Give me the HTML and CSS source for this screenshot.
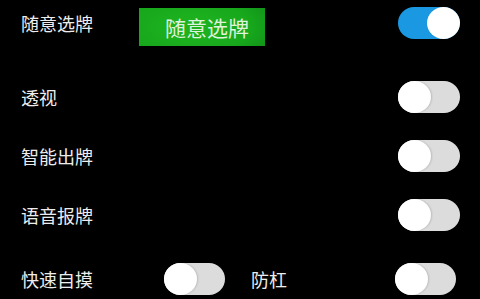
FILE: index.html
```html
<!DOCTYPE html>
<html lang="zh">
<head>
<meta charset="utf-8">
<link rel="stylesheet" href="styles.css">
</head>
<body>
<div class="panel">
  <div class="row row-first">
    <span class="label">随意选牌</span>
    <div class="btn-green">随意选牌</div>
    <div class="toggle on"><span class="knob"></span></div>
  </div>
  <div class="row">
    <span class="label">透视</span>
    <div class="toggle"><span class="knob"></span></div>
  </div>
  <div class="row">
    <span class="label">智能出牌</span>
    <div class="toggle"><span class="knob"></span></div>
  </div>
  <div class="row">
    <span class="label">语音报牌</span>
    <div class="toggle"><span class="knob"></span></div>
  </div>
  <div class="row row-last">
    <span class="label">快速自摸</span>
    <div class="toggle toggle-mid"><span class="knob"></span></div>
    <span class="label label-mid">防杠</span>
    <div class="toggle toggle-end"><span class="knob"></span></div>
  </div>
</div>
</body>
</html>
```
FILE: styles.css
```css
html, body {
  margin: 0;
  padding: 0;
  background: #000;
  overflow: hidden;
  height: 299px;
}
.panel {
  font-family: "Noto Sans CJK SC", "Noto Sans", sans-serif;
  color: #ededed;
  padding: 0 20px 0 21px;
}
.row {
  display: flex;
  align-items: center;
  height: 59px;
}
.row-first {
  height: 46px;
  margin-bottom: 21px;
}
.row-last {
  height: auto;
  padding-top: 19px;
  padding-right: 4px;
}
.label {
  font-size: 18px;
  line-height: 20px;
  width: 72px;
  white-space: nowrap;
}
.label-mid {
  width: auto;
  margin-left: 26px;
}
.btn-green {
  margin-left: 46px;
  margin-top: 8px;
  width: 100px;
  height: 38px;
  padding-left: 26px;
  display: flex;
  align-items: center;
  font-size: 21px;
  color: #dff2dc;
  background: radial-gradient(ellipse 80% 120% at 40% 50%, #1fb41f 0%, #17a81c 60%, #0f8a18 100%);
}
.toggle {
  margin-left: auto;
  width: 62px;
  height: 32px;
  border-radius: 16px;
  background: #dcdcdc;
  position: relative;
}
.toggle .knob {
  position: absolute;
  left: 0;
  top: 0;
  width: 33px;
  height: 32px;
  border-radius: 50%;
  background: #fff;
  box-shadow: 1px 0 2px rgba(0,0,0,0.15);
}
.toggle.on {
  background: #1b98e2;
}
.toggle.on .knob {
  left: 29px;
}
.toggle-mid {
  margin-left: 71px;
  width: 61px;
}
.toggle-end {
  width: 61px;
}
```
